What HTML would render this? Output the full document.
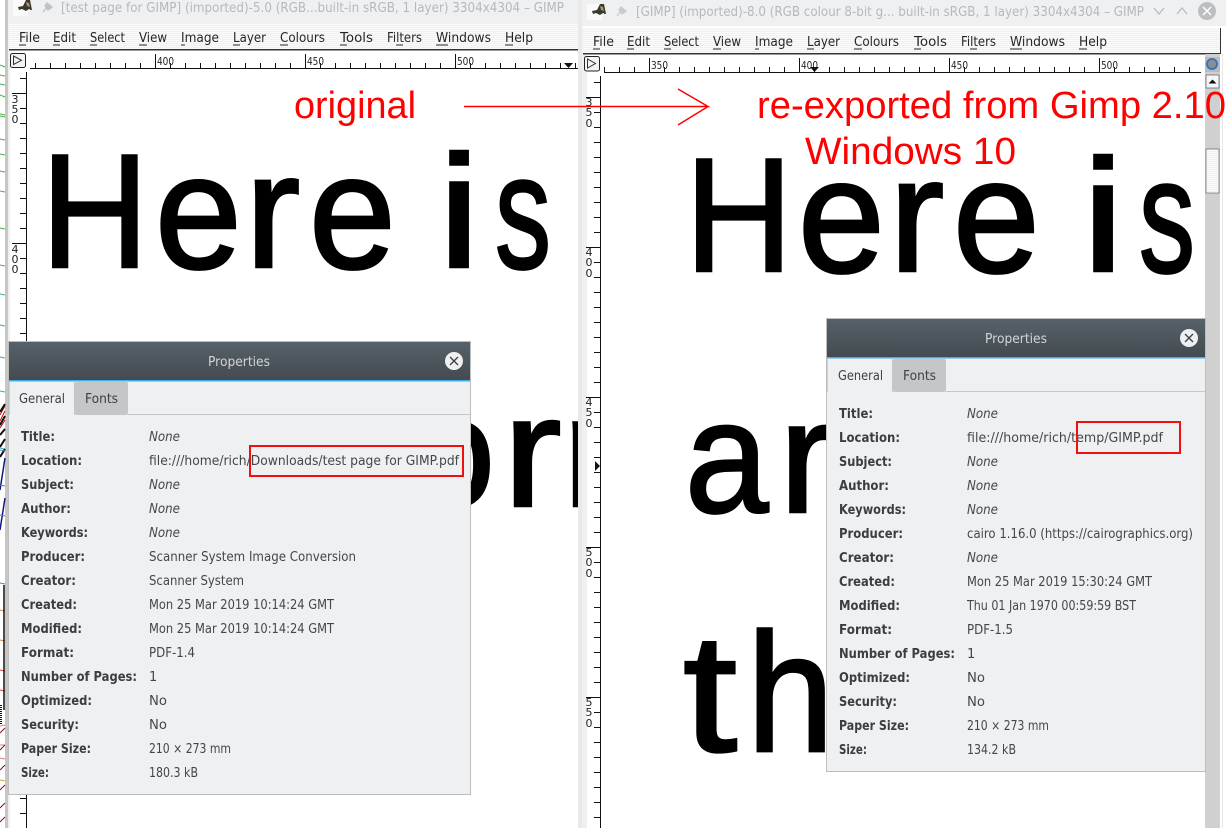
<!DOCTYPE html>
<html lang="en"><head><meta charset="utf-8"><title>GIMP PDF comparison</title>
<style>
html,body{margin:0;padding:0;background:#fff;width:1226px;height:828px;overflow:hidden}
svg{display:block}
.m{font:13px "DejaVu Sans","Liberation Sans",sans-serif;fill:#232629}
.t{font:13px "DejaVu Sans","Liberation Sans",sans-serif;fill:#b6b9bc}
.l{font:bold 13px "DejaVu Sans","Liberation Sans",sans-serif;fill:#3a3e42}
.v{font:13px "DejaVu Sans","Liberation Sans",sans-serif;fill:#43474b}
.i{font:italic 13px "DejaVu Sans","Liberation Sans",sans-serif;fill:#43474b}
.tb{font:13px "DejaVu Sans","Liberation Sans",sans-serif;fill:#d2d5d8}
.tab{font:13px "DejaVu Sans","Liberation Sans",sans-serif;fill:#3d4145}
.r{font:10.5px "DejaVu Sans","Liberation Sans",sans-serif;fill:#222}
.d{font:11px "DejaVu Sans","Liberation Sans",sans-serif;fill:#222;text-anchor:middle}
.big{font:100px "Liberation Sans",sans-serif;fill:#000;stroke:#000;stroke-width:1.6}
.red{font:38px "Liberation Sans",sans-serif;fill:#f00}
</style></head><body>
<svg xmlns="http://www.w3.org/2000/svg" width="1226" height="828" viewBox="0 0 1226 828">
<defs>
<linearGradient id="hd" x1="0" y1="0" x2="0" y2="1"><stop offset="0" stop-color="#566169"/><stop offset="1" stop-color="#434b50"/></linearGradient>
<pattern id="st" width="4" height="2" patternUnits="userSpaceOnUse"><rect width="4" height="1" fill="#fbfbfb"/><rect y="1" width="4" height="1" fill="#f0f0f0"/></pattern>
<pattern id="hl" x="5" y="0" width="15" height="100" patternUnits="userSpaceOnUse"><rect x="0" y="63" width="1" height="5" fill="#111"/></pattern>
<pattern id="hr" x="4" y="0" width="15" height="100" patternUnits="userSpaceOnUse"><rect x="0" y="67" width="1" height="5" fill="#111"/></pattern>
<pattern id="vl" x="0" y="3" width="100" height="15" patternUnits="userSpaceOnUse"><rect x="20" y="0" width="6" height="1" fill="#111"/></pattern>
<pattern id="vr" x="0" y="7" width="700" height="15" patternUnits="userSpaceOnUse"><rect x="594" y="0" width="6" height="1" fill="#111"/></pattern>
<clipPath id="c1"><rect x="27" y="69" width="551" height="759"/></clipPath>
<clipPath id="c2"><rect x="601" y="73" width="604" height="755"/></clipPath>
</defs>

<!-- desktop strip -->
<rect width="1226" height="828" fill="#fff"/>
<rect x="5" y="0" width="3" height="828" fill="#c9c5c2"/>
<g fill="none" stroke-width="1">
<path stroke="#46b04a" d="M0 65l5 2M0 75l5 1M0 84l5 1M0 95l5 2M0 114l5 1M0 116l5 1M0 139l5 1M0 154l5 1M0 171l5 1M0 191l5 1M0 228l5 1M0 265l5 1"/>
<path stroke="#35b3a5" d="M0 294l5 1M0 325l5 1M0 357l5 1M0 391l5 1M0 448l5 1"/>
<path stroke="#c01010" d="M0 415l5-9M0 421l5-10M0 428l5-8"/>
<path stroke="#111" stroke-width="2" d="M0 412l5-8M0 425l5-9M0 435l5-6M0 447l5-8M0 457l5-8"/>
<path stroke="#101b80" stroke-width="1.5" d="M0 490l5-32M0 530l5-32"/>
<path stroke="#4a7fd0" d="M0 450l5 1M0 485l5 1M0 515l5 1M0 583l5 1"/>
<path stroke="#d08040" d="M0 610l5 1M0 640l5 1"/>
<path stroke="#d04040" d="M0 670l5 1M0 690l5 1"/>
<path stroke="#111" stroke-width="1.5" d="M4 585v125"/>
<path stroke="#111" stroke-dasharray="1 1" stroke-width="4" d="M0 705v20"/>
<path stroke="#e07a8a" d="M0 726l5-1M0 745l5 0M0 758l5 1"/>
<path stroke="#8a1530" d="M0 733l5-5M0 750l5-5M0 770l5-5M0 790l5-5M0 808l5-5M0 822l5-5"/>
<path stroke="#d8a040" d="M0 780l5 1"/>
</g>

<!-- left window -->
<rect x="8" y="0" width="570" height="828" fill="#eff0f1"/>
<rect x="10" y="50" width="568" height="778" fill="#fff"/>
<rect x="13" y="0" width="15" height="16" fill="#fafafa"/>
<path d="M18 7l5-1 3-6h4l1 5 1 5-3-1-3 2-4-2-3 1z" fill="#3a382f"/>
<path d="M26 2l3 1 1 4-3-1z" fill="#a89868"/><path d="M30 8l2 2-2 0z" fill="#444"/>
<path d="M43 12l4-5M46 4l5 5M47 3l5 4-4 3-3-4z" fill="#bcc3ca" stroke="#bcc3ca" stroke-width="1.300"/>
<text class="t" x="61" y="12" textLength="503" lengthAdjust="spacingAndGlyphs">[test page for GIMP] (imported)-5.0 (RGB...built-in sRGB, 1 layer) 3304x4304 – GIMP</text>
<rect x="9" y="24" width="569" height="25" fill="url(#st)"/>
<rect x="9" y="49" width="569" height="1.5" fill="#333"/>
<text class="m" x="19" y="42" textLength="21" lengthAdjust="spacingAndGlyphs">File</text>
<text class="m" x="53" y="42" textLength="23" lengthAdjust="spacingAndGlyphs">Edit</text>
<text class="m" x="90" y="42" textLength="35" lengthAdjust="spacingAndGlyphs">Select</text>
<text class="m" x="139" y="42" textLength="28" lengthAdjust="spacingAndGlyphs">View</text>
<text class="m" x="181" y="42" textLength="38" lengthAdjust="spacingAndGlyphs">Image</text>
<text class="m" x="233" y="42" textLength="33" lengthAdjust="spacingAndGlyphs">Layer</text>
<text class="m" x="280" y="42" textLength="45" lengthAdjust="spacingAndGlyphs">Colours</text>
<text class="m" x="340" y="42" textLength="33" lengthAdjust="spacingAndGlyphs">Tools</text>
<text class="m" x="387" y="42" textLength="35" lengthAdjust="spacingAndGlyphs">Filters</text>
<text class="m" x="436" y="42" textLength="55" lengthAdjust="spacingAndGlyphs">Windows</text>
<text class="m" x="505" y="42" textLength="28" lengthAdjust="spacingAndGlyphs">Help</text>
<path stroke="#232629" d="M19 45h7M53 45h7M90 45h7M139 45h8M181 45h4M233 45h7M280 45h8M340 45h7M396 45h7M436 45h12M505 45h8"/>

<!-- big scanned text, left -->
<g clip-path="url(#c1)">
<g>
<text class="big" transform="translate(41 267) scale(1.49 1.62)">H</text>
<text class="big" transform="translate(155 268) scale(1.56 1.63)">e</text>
<text class="big" transform="translate(245 267) scale(1.66 1.63)">r</text>
<text class="big" transform="translate(309 268) scale(1.56 1.63)">e</text>
<text class="big" transform="translate(438 267) scale(1.9 1.6)">i </text>
<text class="big" transform="translate(495 268) scale(1.12 1.63)">s</text>
</g>
<text class="big" transform="translate(409 506) scale(1.55 1.58)">o</text>
<text class="big" transform="translate(503 506) scale(1.76 1.58)">r</text>
<text class="big" transform="translate(563 506) scale(1.6 1.58)">n</text>
</g>

<!-- left rulers -->
<rect x="30" y="52" width="548" height="17" fill="url(#hl)"/>
<rect x="30" y="68" width="548" height="1" fill="#111"/>
<path stroke="#111" d="M155.500 54v14M305.500 54v14M455.500 54v14"/>
<text class="r" x="157" y="65" textLength="17" lengthAdjust="spacingAndGlyphs">400</text>
<text class="r" x="307" y="65" textLength="17" lengthAdjust="spacingAndGlyphs">450</text>
<text class="r" x="457" y="65" textLength="17" lengthAdjust="spacingAndGlyphs">500</text>
<path d="M564 63h9l-4.500 5z" fill="#111"/>
<rect x="10.500" y="53.500" width="15" height="14" rx="2" fill="#f4f4f4" stroke="#222"/>
<path d="M13.500 56v8.500l8-4.200z" fill="none" stroke="#333"/>
<rect x="20" y="73" width="6" height="755" fill="url(#vl)"/>
<rect x="26" y="72" width="1" height="756" fill="#111"/>
<path stroke="#111" d="M12 93.500h14M12 243.500h14"/>
<text class="d" x="15" y="103">3</text><text class="d" x="15" y="113">5</text><text class="d" x="15" y="123">0</text>
<text class="d" x="15" y="253">4</text><text class="d" x="15" y="263">0</text><text class="d" x="15" y="273">0</text>

<!-- gap between windows -->
<rect x="578" y="0" width="4" height="828" fill="#e9e9e9"/>

<!-- right window -->
<rect x="582" y="0" width="644" height="28" fill="#eff0f1"/>
<rect x="582" y="28" width="5" height="800" fill="#eff0f1"/>
<rect x="587" y="4" width="15" height="16" fill="#fafafa"/>
<path d="M592 11l5-1 3-6h4l1 5 1 5-3-1-3 2-4-2-3 1z" fill="#3a382f"/>
<path d="M600 6l3 1 1 4-3-1z" fill="#a89868"/><path d="M604 12l2 2-2 0z" fill="#444"/>
<path d="M617 16l4-5M620 8l5 5M621 7l5 4-4 3-3-4z" fill="#c6ccd2" stroke="#c6ccd2" stroke-width="1.300"/>
<text class="t" x="636" y="16" textLength="508" lengthAdjust="spacingAndGlyphs">[GIMP] (imported)-8.0 (RGB colour 8-bit g... built-in sRGB, 1 layer) 3304x4304 – GIMP</text>
<path d="M1154 8l5 6 5-6M1177 14l5-6 5 6" fill="none" stroke="#b9bcbe" stroke-width="1.300"/>
<circle cx="1207" cy="11" r="9" fill="#bcbec0"/>
<path d="M1203 7l8 8M1211 7l-8 8" stroke="#fff" stroke-width="1.500"/>
<rect x="583" y="28" width="637" height="25" fill="url(#st)"/>
<rect x="583" y="53" width="637" height="1.500" fill="#333"/>
<rect x="1220" y="28" width="1" height="26" fill="#333"/>
<rect x="1221" y="26" width="5" height="802" fill="#fff"/>
<rect x="583" y="26" width="638" height="2" fill="#fff"/>
<text class="m" x="593" y="46" textLength="21" lengthAdjust="spacingAndGlyphs">File</text>
<text class="m" x="627" y="46" textLength="23" lengthAdjust="spacingAndGlyphs">Edit</text>
<text class="m" x="664" y="46" textLength="35" lengthAdjust="spacingAndGlyphs">Select</text>
<text class="m" x="713" y="46" textLength="28" lengthAdjust="spacingAndGlyphs">View</text>
<text class="m" x="755" y="46" textLength="38" lengthAdjust="spacingAndGlyphs">Image</text>
<text class="m" x="807" y="46" textLength="33" lengthAdjust="spacingAndGlyphs">Layer</text>
<text class="m" x="854" y="46" textLength="45" lengthAdjust="spacingAndGlyphs">Colours</text>
<text class="m" x="914" y="46" textLength="33" lengthAdjust="spacingAndGlyphs">Tools</text>
<text class="m" x="961" y="46" textLength="35" lengthAdjust="spacingAndGlyphs">Filters</text>
<text class="m" x="1010" y="46" textLength="55" lengthAdjust="spacingAndGlyphs">Windows</text>
<text class="m" x="1079" y="46" textLength="28" lengthAdjust="spacingAndGlyphs">Help</text>
<path stroke="#232629" d="M593 49h7M627 49h7M664 49h7M713 49h8M755 49h4M807 49h7M854 49h8M914 49h7M970 49h7M1010 49h12M1079 49h8"/>

<!-- big scanned text, right -->
<g clip-path="url(#c2)">
<g transform="translate(644 4)">
<text class="big" transform="translate(41 267) scale(1.49 1.62)">H</text>
<text class="big" transform="translate(154 268) scale(1.56 1.63)">e</text>
<text class="big" transform="translate(245 267) scale(1.66 1.63)">r</text>
<text class="big" transform="translate(309 268) scale(1.56 1.63)">e</text>
<text class="big" transform="translate(438 267) scale(1.9 1.6)">i </text>
<text class="big" transform="translate(495 268) scale(1.12 1.63)">s</text>
</g>
<text class="big" transform="translate(685 512) scale(1.5 1.6)">a</text>
<text class="big" transform="translate(779 512) scale(1.66 1.6)">r</text>
<text class="big" transform="translate(683 751) scale(1.95 1.68)">t</text>
<text class="big" transform="translate(747 751) scale(1.56 1.69)">h</text>
</g>

<!-- right rulers -->
<rect x="604" y="56" width="597" height="17" fill="url(#hr)"/>
<rect x="604" y="72" width="597" height="1" fill="#111"/>
<path stroke="#111" d="M649.500 58v14M799.500 58v14M949.500 58v14M1099.500 58v14"/>
<text class="r" x="651" y="69" textLength="17" lengthAdjust="spacingAndGlyphs">350</text>
<text class="r" x="801" y="69" textLength="17" lengthAdjust="spacingAndGlyphs">400</text>
<text class="r" x="951" y="69" textLength="17" lengthAdjust="spacingAndGlyphs">450</text>
<text class="r" x="1101" y="69" textLength="17" lengthAdjust="spacingAndGlyphs">500</text>
<path d="M810 67h9l-4.500 5z" fill="#111"/>
<rect x="584.500" y="56.500" width="15" height="14.500" rx="2" fill="#f4f4f4" stroke="#222"/>
<path d="M587.500 59v9l8-4.500z" fill="none" stroke="#333"/>
<rect x="594" y="77" width="6" height="751" fill="url(#vr)"/>
<rect x="600" y="76" width="1" height="752" fill="#111"/>
<path stroke="#111" d="M586 97.500h14M586 247.500h14M586 397.500h14M586 547.500h14M586 697.500h14"/>
<text class="d" x="589" y="106">3</text><text class="d" x="589" y="116">5</text><text class="d" x="589" y="127">0</text>
<text class="d" x="589" y="256">4</text><text class="d" x="589" y="266">0</text><text class="d" x="589" y="277">0</text>
<text class="d" x="589" y="406">4</text><text class="d" x="589" y="416">5</text><text class="d" x="589" y="427">0</text>
<text class="d" x="589" y="556">5</text><text class="d" x="589" y="566">0</text><text class="d" x="589" y="577">0</text>
<text class="d" x="589" y="706">5</text><text class="d" x="589" y="716">5</text><text class="d" x="589" y="727">0</text>
<path d="M595 461l5 5-5 5z" fill="#111"/>

<!-- scrollbar -->
<rect x="1205" y="54" width="15" height="774" fill="#d0d0d0"/>
<rect x="1205" y="57" width="15" height="15" fill="#b8bcc0"/>
<circle cx="1212" cy="64" r="5" fill="#8a8f94" stroke="#3f74b8" stroke-width="2"/>
<rect x="1206" y="75" width="13" height="13" fill="#f6f6f6" stroke="#444" stroke-width="0.600"/>
<path d="M1208.500 83.500h8l-4-4z" fill="#111"/>
<rect x="1206" y="149" width="13" height="44" fill="url(#st)" stroke="#555" stroke-width="0.600"/>
<rect x="1222" y="54" width="1" height="774" fill="#e8e8e8"/>

<!-- red annotations -->
<text class="red" x="294" y="118" textLength="122" lengthAdjust="spacingAndGlyphs">original</text>
<text class="red" x="757" y="118" textLength="469" lengthAdjust="spacingAndGlyphs">re-exported from Gimp 2.10</text>
<text class="red" x="805" y="164" textLength="211" lengthAdjust="spacingAndGlyphs">Windows 10</text>
<path d="M464 106.500H708L678 89M708 106.500L678 125" fill="none" stroke="#f00" stroke-width="1.500"/>

<!-- left dialog -->
<rect x="8.500" y="341.500" width="462" height="453" fill="#eff0f1" stroke="#bcbdbe"/>
<rect x="9" y="342" width="461" height="38" fill="url(#hd)"/>
<rect x="9" y="380" width="461" height="1.500" fill="#3daee9"/>
<text class="tb" x="208" y="366" textLength="62" lengthAdjust="spacingAndGlyphs">Properties</text>
<circle cx="454" cy="361" r="9" fill="#eff0f1"/>
<path d="M450 357l8 8M458 357l-8 8" stroke="#3c4145" stroke-width="1.300"/>
<rect x="75" y="382" width="53" height="33" rx="2" fill="#c5c6c7"/>
<rect x="128" y="414" width="342" height="1" fill="#c5c6c7"/>
<rect x="9" y="382" width="1" height="33" fill="#cfd0d1"/>
<rect x="74" y="382" width="1" height="33" fill="#c5c6c7"/>
<text class="tab" x="19" y="403" textLength="46" lengthAdjust="spacingAndGlyphs">General</text>
<text class="tab" x="85" y="403" textLength="33" lengthAdjust="spacingAndGlyphs">Fonts</text>
<text class="l" x="21" y="441" textLength="34" lengthAdjust="spacingAndGlyphs">Title:</text>
<text class="l" x="21" y="465" textLength="61" lengthAdjust="spacingAndGlyphs">Location:</text>
<text class="l" x="21" y="489" textLength="53" lengthAdjust="spacingAndGlyphs">Subject:</text>
<text class="l" x="21" y="513" textLength="50" lengthAdjust="spacingAndGlyphs">Author:</text>
<text class="l" x="21" y="537" textLength="67" lengthAdjust="spacingAndGlyphs">Keywords:</text>
<text class="l" x="21" y="561" textLength="64" lengthAdjust="spacingAndGlyphs">Producer:</text>
<text class="l" x="21" y="585" textLength="55" lengthAdjust="spacingAndGlyphs">Creator:</text>
<text class="l" x="21" y="609" textLength="56" lengthAdjust="spacingAndGlyphs">Created:</text>
<text class="l" x="21" y="633" textLength="61" lengthAdjust="spacingAndGlyphs">Modified:</text>
<text class="l" x="21" y="657" textLength="53" lengthAdjust="spacingAndGlyphs">Format:</text>
<text class="l" x="21" y="681" textLength="116" lengthAdjust="spacingAndGlyphs">Number of Pages:</text>
<text class="l" x="21" y="705" textLength="71" lengthAdjust="spacingAndGlyphs">Optimized:</text>
<text class="l" x="21" y="729" textLength="58" lengthAdjust="spacingAndGlyphs">Security:</text>
<text class="l" x="21" y="753" textLength="70" lengthAdjust="spacingAndGlyphs">Paper Size:</text>
<text class="l" x="21" y="777" textLength="28" lengthAdjust="spacingAndGlyphs">Size:</text>
<text class="i" x="149" y="441" textLength="31" lengthAdjust="spacingAndGlyphs">None</text>
<text class="v" x="149" y="465" textLength="310" lengthAdjust="spacingAndGlyphs">file:///home/rich/Downloads/test page for GIMP.pdf</text>
<text class="i" x="149" y="489" textLength="31" lengthAdjust="spacingAndGlyphs">None</text>
<text class="i" x="149" y="513" textLength="31" lengthAdjust="spacingAndGlyphs">None</text>
<text class="i" x="149" y="537" textLength="31" lengthAdjust="spacingAndGlyphs">None</text>
<text class="v" x="149" y="561" textLength="207" lengthAdjust="spacingAndGlyphs">Scanner System Image Conversion</text>
<text class="v" x="149" y="585" textLength="95" lengthAdjust="spacingAndGlyphs">Scanner System</text>
<text class="v" x="149" y="609" textLength="185" lengthAdjust="spacingAndGlyphs">Mon 25 Mar 2019 10:14:24 GMT</text>
<text class="v" x="149" y="633" textLength="185" lengthAdjust="spacingAndGlyphs">Mon 25 Mar 2019 10:14:24 GMT</text>
<text class="v" x="149" y="657" textLength="46" lengthAdjust="spacingAndGlyphs">PDF-1.4</text>
<text class="v" x="149" y="681">1</text>
<text class="v" x="149" y="705" textLength="18" lengthAdjust="spacingAndGlyphs">No</text>
<text class="v" x="149" y="729" textLength="18" lengthAdjust="spacingAndGlyphs">No</text>
<text class="v" x="149" y="753" textLength="82" lengthAdjust="spacingAndGlyphs">210 × 273 mm</text>
<text class="v" x="149" y="777" textLength="49" lengthAdjust="spacingAndGlyphs">180.3 kB</text>
<rect x="250" y="446" width="213" height="30" fill="none" stroke="#f01010" stroke-width="2"/>

<!-- right dialog -->
<rect x="826.500" y="318.500" width="379" height="453" fill="#eff0f1" stroke="#bcbdbe"/>
<rect x="827" y="319" width="378" height="38" fill="url(#hd)"/>
<rect x="827" y="357" width="378" height="1.500" fill="#3daee9"/>
<text class="tb" x="985" y="343" textLength="62" lengthAdjust="spacingAndGlyphs">Properties</text>
<circle cx="1189" cy="338" r="9" fill="#eff0f1"/>
<path d="M1185 334l8 8M1193 334l-8 8" stroke="#3c4145" stroke-width="1.300"/>
<rect x="893" y="359" width="53" height="33" rx="2" fill="#c5c6c7"/>
<rect x="946" y="391" width="259" height="1" fill="#c5c6c7"/>
<rect x="827" y="359" width="1" height="33" fill="#cfd0d1"/>
<rect x="892" y="359" width="1" height="33" fill="#c5c6c7"/>
<text class="tab" x="838" y="380" textLength="45" lengthAdjust="spacingAndGlyphs">General</text>
<text class="tab" x="903" y="380" textLength="33" lengthAdjust="spacingAndGlyphs">Fonts</text>
<text class="l" x="839" y="418" textLength="34" lengthAdjust="spacingAndGlyphs">Title:</text>
<text class="l" x="839" y="442" textLength="61" lengthAdjust="spacingAndGlyphs">Location:</text>
<text class="l" x="839" y="466" textLength="53" lengthAdjust="spacingAndGlyphs">Subject:</text>
<text class="l" x="839" y="490" textLength="50" lengthAdjust="spacingAndGlyphs">Author:</text>
<text class="l" x="839" y="514" textLength="67" lengthAdjust="spacingAndGlyphs">Keywords:</text>
<text class="l" x="839" y="538" textLength="64" lengthAdjust="spacingAndGlyphs">Producer:</text>
<text class="l" x="839" y="562" textLength="55" lengthAdjust="spacingAndGlyphs">Creator:</text>
<text class="l" x="839" y="586" textLength="56" lengthAdjust="spacingAndGlyphs">Created:</text>
<text class="l" x="839" y="610" textLength="61" lengthAdjust="spacingAndGlyphs">Modified:</text>
<text class="l" x="839" y="634" textLength="53" lengthAdjust="spacingAndGlyphs">Format:</text>
<text class="l" x="839" y="658" textLength="116" lengthAdjust="spacingAndGlyphs">Number of Pages:</text>
<text class="l" x="839" y="682" textLength="71" lengthAdjust="spacingAndGlyphs">Optimized:</text>
<text class="l" x="839" y="706" textLength="58" lengthAdjust="spacingAndGlyphs">Security:</text>
<text class="l" x="839" y="730" textLength="70" lengthAdjust="spacingAndGlyphs">Paper Size:</text>
<text class="l" x="839" y="754" textLength="28" lengthAdjust="spacingAndGlyphs">Size:</text>
<text class="i" x="967" y="418" textLength="31" lengthAdjust="spacingAndGlyphs">None</text>
<text class="v" x="967" y="442" textLength="196" lengthAdjust="spacingAndGlyphs">file:///home/rich/temp/GIMP.pdf</text>
<text class="i" x="967" y="466" textLength="31" lengthAdjust="spacingAndGlyphs">None</text>
<text class="i" x="967" y="490" textLength="31" lengthAdjust="spacingAndGlyphs">None</text>
<text class="i" x="967" y="514" textLength="31" lengthAdjust="spacingAndGlyphs">None</text>
<text class="v" x="967" y="538" textLength="226" lengthAdjust="spacingAndGlyphs">cairo 1.16.0 (https://cairographics.org)</text>
<text class="i" x="967" y="562" textLength="31" lengthAdjust="spacingAndGlyphs">None</text>
<text class="v" x="967" y="586" textLength="185" lengthAdjust="spacingAndGlyphs">Mon 25 Mar 2019 15:30:24 GMT</text>
<text class="v" x="967" y="610" textLength="169" lengthAdjust="spacingAndGlyphs">Thu 01 Jan 1970 00:59:59 BST</text>
<text class="v" x="967" y="634" textLength="46" lengthAdjust="spacingAndGlyphs">PDF-1.5</text>
<text class="v" x="967" y="658">1</text>
<text class="v" x="967" y="682" textLength="18" lengthAdjust="spacingAndGlyphs">No</text>
<text class="v" x="967" y="706" textLength="18" lengthAdjust="spacingAndGlyphs">No</text>
<text class="v" x="967" y="730" textLength="82" lengthAdjust="spacingAndGlyphs">210 × 273 mm</text>
<text class="v" x="967" y="754" textLength="49" lengthAdjust="spacingAndGlyphs">134.2 kB</text>
<rect x="1077" y="422" width="103" height="31" fill="none" stroke="#f01010" stroke-width="2"/>
</svg>
</body></html>
